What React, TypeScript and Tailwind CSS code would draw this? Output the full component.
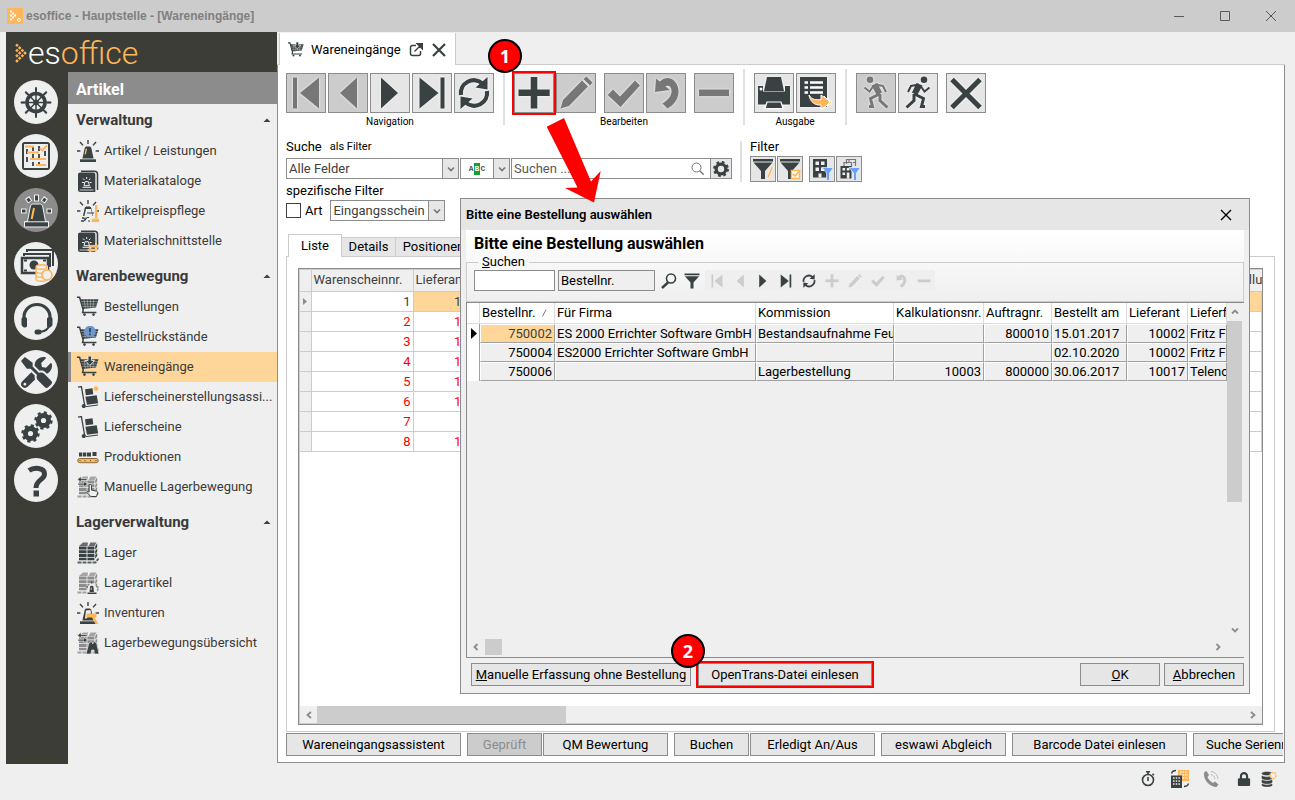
import type { ReactNode } from "react";
import { FaLock, FaTools } from "react-icons/fa";

const DARK = "#3a4142";
const ORANGE = "#fdb65a";

type SvgProps = { size?: number; box?: number; children: ReactNode };

const Svg = ({ size = 22, box = size, children }: SvgProps) => (
    <svg width={size} height={size} viewBox={`0 0 ${box} ${box}`} fill="none" className="shrink-0" aria-hidden="true">
        {children}
    </svg>
);

/* ---------- drawings ---------- */

const Siren = ({ glow = true }: { glow?: boolean }) => (
    <>
        <g stroke={DARK} strokeWidth="1.4">
            <path d="M11 0v4M3 2l3 3.4M19 2l-3 3.4M0 11h3.4M18.6 11H22" />
        </g>
        <path d="M5.4 18.4 7.6 8.6C8 7 8.6 6.6 10 6.6h2c1.4 0 2 .4 2.4 2l2.2 9.8z" fill={DARK} />
        <path d="M3 19.3h16V22H3z" fill={DARK} />
        {glow && <path d="M9.4 8.6 8.2 14.4" stroke={ORANGE} strokeWidth="1.4" />}
    </>
);

const Book = () => (
    <>
        <path d="M4 1.2h13.5c2 0 3 1 3 3V20" stroke={DARK} strokeWidth="1.5" />
        <path d="M1 5c0-1.600.8-2.400 2.400-2.400H16c1.600 0 2.300.8 2.300 2.400v17H3.200C1.800 22 1 21.200 1 19.800z" fill={DARK} />
        <path d="M2.600 20h14" stroke="#efefef" strokeWidth=".8" />
        <path d="M9.700 7v2M5 12.500h2M12.600 12.500h2M6 8.500l1.500 1.500M13.400 8.500 12 10M5.500 17.300h8.600M7 15.700l1-4h3.400l1 4z" stroke="#efefef" />
    </>
);

const Cart = () => (
    <>
        <path d="M0 1.200h2.600L6.200 14l-.6 2.500h13.800" stroke={DARK} strokeWidth="1.500" />
        <path d="M3.200 3.200h18.300L19 11.600 5.600 13z" fill={DARK} />
        <path d="M4 5.500h17M4.800 8h15.600M5.500 10.400h14M7 3.400l1.400 9M10.200 3.400l.8 9M13.400 3.400v9M16.600 3.400l-.8 9" stroke="#efefef" strokeWidth=".4" />
        <circle cx="7.500" cy="18.600" r="1.300" fill={DARK} />
        <circle cx="16.500" cy="18.600" r="1.300" fill={DARK} />
    </>
);

const ArrowDown = () => (
    <path d="M11 0h3.600v4.500h3L12.800 9.400 8 4.500h3z" fill={DARK} stroke="#fff" strokeWidth=".8" />
);

const Trolley = () => (
    <>
        <path d="M1 1.200 4.400.6 7.600 19" stroke={DARK} strokeWidth="1.300" />
        <path d="m8 3.200 7.500-1 .8 6-7.500 1z" fill={DARK} />
        <path d="m8.400 10.800 11.300-1.600 1.500 8L10 18.800z" fill={DARK} />
        <path d="m9 20.600 12-1.600" stroke={DARK} />
        <circle cx="6.800" cy="20" r="2.100" fill={DARK} />
    </>
);

const Shelf = ({ color }: { color: string }) => (
    <>
        <path d="M2 4 6 .500h5L10.500 4zM11.500 4l2-3.500h6L17.500 4z" fill={color} opacity=".75" />
        <path d="M2 4.600h7.600v2.900H2zM2 8.300h7.600v2.900H2zM2 12h7.600v2.900H2zM2 15.700h7.600v2.600H2z" fill={color} />
        <path d="M10.400 4.600h7v2.900h-7zM10.400 8.300h7v2.900h-7zM10.400 12h7v2.900h-7zM10.400 15.700h7v2.600h-7z" fill={color} />
        <path d="m18.200 4.200 2-3v4l-2 2.500zM18.200 9l2-2.500v3.300l-2 2.500zM18.200 13.300l2-2.500v3.300l-2 2.500z" fill={color} />
        <path d="M.500 20.500h18l3-4" stroke={color} strokeWidth="2" strokeDasharray="4 1" opacity=".8" />
    </>
);

const MoveArrows = () => (
    <g stroke="#efefef" strokeWidth=".6" fill={DARK}>
        <path d="M.500 3.300 4 .500v2h6v1.800H4v2z" />
        <path d="M10.500 8 7 5.200v2H1V9h6v2z" />
    </g>
);

const navIcons: Record<string, ReactNode> = {
    siren: <Siren />,
    book: <Book />,
    price: (
        <>
            <Siren glow={false} />
            <path d="M9 9h5l2 9H7z" fill="#efefef" />
            <path d="M1 16h20v6H1z" fill="#efefef" />
            <path d="M10 13h7M7 21.300l3-4M8 18a1 1 0 1 0 .1 0M12 17.500h-2M11 21h2" stroke={DARK} />
            <path d="M4 21h3M5 18h2" stroke={DARK} strokeWidth="1.500" />
            <path d="M18 5h2.400v13H18zM15.500 18.500H22V22h-8z" fill={ORANGE} />
        </>
    ),
    interface: (
        <>
            <Book />
            <g fill={ORANGE} stroke="#efefef" strokeWidth=".5">
                <path d="M22 16.300 18.500 13.500v1.800H12v2h6.500v1.800z" />
                <path d="M10.500 20 14 17.200V19h7v2h-7v1.800z" />
            </g>
        </>
    ),
    cart: <Cart />,
    backlog: (
        <>
            <Cart />
            <circle cx="13" cy="5.500" r="5.800" fill="#6d97d0" />
            <path d="M13 2v4.200M13 7.500v1.700" stroke={DARK} strokeWidth="1.700" />
        </>
    ),
    incoming: (
        <>
            <Cart />
            <ArrowDown />
        </>
    ),
    assistant: (
        <>
            <Trolley />
            <circle cx="19" cy="2.600" r="2" fill={ORANGE} />
            <path d="M19 0v5.200M16.400 2.600h5.200M17.200.800l3.600 3.600M20.800.800l-3.600 3.600" stroke={ORANGE} />
        </>
    ),
    trolley: <Trolley />,
    production: (
        <>
            <path d="M2 6.500h3.300v4H2zM6 6.500h3.300v4H6zM10 6.500h4v4h-4zM15.500 6h4v4h-4z" fill={DARK} />
            <rect x=".7" y="12.500" width="20.600" height="4.200" rx="2.100" fill={ORANGE} stroke="#8a6a3c" />
            <path d="M2.500 14.600h1M7.500 14.600h1M13 14.600h1M18.500 14.600h1" stroke={DARK} />
        </>
    ),
    manual: (
        <>
            <Shelf color="#8c8c8c" />
            <MoveArrows />
            <path d="M13 8.500c1.200 0 1.500.6 1.500 1.600v4l5 1c1 .3 1.200 1 1 2l-1 3.400h-5.700L9.400 16c.8-1 2-.6 2.700.3V10c0-1 .2-1.500.9-1.500z" fill="#efefef" stroke={DARK} />
        </>
    ),
    shelf: <Shelf color={DARK} />,
    shelfArticle: (
        <>
            <Shelf color="#8c8c8c" />
            <path d="M9.500 22 11 14.500l2-2.500h4l2 2.500L20.500 22z" fill="#efefef" />
            <path d="M12.500 20 13 14.500c.3-1 3-1 3.400 0L17 20zM10.500 20.600h9V22h-9z" fill={DARK} />
            <path d="M14.200 15.500v2.500" stroke={ORANGE} />
            <path d="M9 15h2M19.500 15h2M14.800 9.500v2" stroke={DARK} />
        </>
    ),
    inventory: (
        <>
            <Siren glow={false} />
            <path d="m9 8.500 4.500-.5.500 3-4.500 5.500H8z" fill="#efefef" />
            <path d="M9.500 11.500h10v4h-2l4 6.500h-3l-3.500-6.500h-5.500z" fill={ORANGE} />
        </>
    ),
    overview: (
        <>
            <Shelf color="#8c8c8c" />
            <MoveArrows />
            <path d="m9 22 3-11 2.500-1.500L15.800 12l1.300-2.500L19.600 11 22 22h-4.600l-.4-4h-2.400l-.6 4z" fill={DARK} stroke="#efefef" strokeWidth=".6" />
        </>
    ),
};

const Gear = ({ cx, cy, r, hole, color = DARK }: { cx: number; cy: number; r: number; hole: number; color?: string }) => {
    const step = (Math.PI * r) / 8;
    return (
        <g stroke={color}>
            <circle cx={cx} cy={cy} r={(r + hole) / 2} strokeWidth={r - hole} />
            <circle cx={cx} cy={cy} r={r} strokeWidth={r * 0.45} strokeDasharray={`${step} ${step}`} />
        </g>
    );
};

const railIcons: { label: string; icon: ReactNode }[] = [
    {
        label: "Start",
        icon: (
            <Svg size={44}>
                <circle cx="22" cy="22.500" r="9" stroke={DARK} strokeWidth="3.600" />
                <circle cx="22" cy="22.500" r="2.800" fill={DARK} />
                <path d="M22 8v29M7.500 22.500h29M11.800 12.300l20.400 20.400M32.200 12.300 11.800 32.700" stroke={DARK} strokeWidth="1.500" />
                <path d="M22 8v3M22 34v3M7.500 22.500h3M33.500 22.500h3M11.800 12.300l2 2M30.200 30.700l2 2M32.200 12.300l-2 2M13.800 30.700l-2 2" stroke={DARK} strokeWidth="2" strokeLinecap="round" />
            </Svg>
        ),
    },
    {
        label: "Planung",
        icon: (
            <Svg size={44}>
                <rect x="9" y="9" width="26" height="26" rx="1.500" stroke={DARK} strokeWidth="2" />
                <path d="M13 15v16M19 12v20M25 12v20M31 17v9" stroke={DARK} strokeWidth="1.800" strokeDasharray="5 3" />
                <path d="M11 12.500h9M13 18.500h12M16 25h16M22 31h10" stroke={ORANGE} strokeWidth="2.200" />
                <path d="m26 14 2.400 2.500 4.600-5" stroke={ORANGE} strokeWidth="2" />
            </Svg>
        ),
    },
    {
        label: "Artikel",
        icon: (
            <Svg size={44}>
                <g stroke="#efefef" strokeWidth="5">
                    <path d="M22.500 6.500v7M13 9.500l3.200 4.500M32 9.500 28.800 14M7 23h5.500M32.500 23H38" />
                </g>
                <g stroke={DARK} strokeWidth="3">
                    <path d="M22.500 7.500v5M13.700 10.500l2 2.800M31.300 10.500l-2 2.800M8 23h3.500M33.500 23H37" />
                </g>
                <path d="M13.500 33.500 16.200 19c.5-2 1.400-3 3.300-3h6c2 0 2.800 1 3.300 3l2.700 14.500h3V39h-24v-5.500z" fill={DARK} stroke="#efefef" />
                <path d="M10.500 33.800h24" stroke="#efefef" />
                <path d="m20 20-2.300 11" stroke={ORANGE} strokeWidth="2" />
            </Svg>
        ),
    },
    {
        label: "Finanzen",
        icon: (
            <Svg size={44}>
                <path d="M13 10V8h26v16M10 14v-2h26v13" stroke={DARK} strokeWidth="2" />
                <rect x="8" y="16" width="26" height="15" fill="#efefef" stroke={DARK} strokeWidth="2.500" />
                <circle cx="20" cy="23" r="4.500" fill={DARK} />
                <path d="M10 18.500h3M10 28.500h3M29 18.500h3" stroke={DARK} strokeWidth="2" />
                <path d="M22 23.500h12v16H22z" fill="#efefef" />
                <path d="M22 25c0-3 11-3 11 0s-11 3-11 0v4c0 3 11 3 11 0M22 29v4c0 3 11 3 11 0M22 33v4c0 3 11 3 11 0v-4" stroke={ORANGE} strokeWidth="1.400" />
                <circle cx="33" cy="33" r="5" fill="#efefef" stroke={ORANGE} strokeWidth="1.600" />
            </Svg>
        ),
    },
    {
        label: "Service",
        icon: (
            <Svg size={44}>
                <path d="M10 25v-4a13 12.500 0 0 1 26 0v4" stroke={DARK} strokeWidth="3.200" />
                <path d="M7.500 22.500c1-2 5-2 5.500 0v8c-1.500 2-4.500 1-5.500-1.500zM33 22.500c1-2 5-2 5.500 0V29c-1 2.500-4 3.500-5.500 1.500z" fill={DARK} />
                <path d="M35.500 29c-1 4-4 6.500-10 7" stroke={DARK} strokeWidth="2" />
                <rect x="20.500" y="33.500" width="7" height="5" rx="2.500" fill={DARK} />
            </Svg>
        ),
    },
    { label: "Werkzeuge", icon: <FaTools size={31} color={DARK} aria-hidden="true" /> },
    {
        label: "Einstellungen",
        icon: (
            <Svg size={44}>
                <Gear cx={29.500} cy={16.500} r={7.500} hole={2.600} />
                <Gear cx={16.500} cy={29.500} r={7.500} hole={2.600} />
            </Svg>
        ),
    },
    {
        label: "Hilfe",
        icon: (
            <Svg size={44}>
                <path d="M15 12.500c5-3.500 15.500-3 15.500 3.500 0 6-8.500 5.500-8.500 14" stroke={DARK} strokeWidth="5" />
                <path d="M19.500 32.500h5.500v6h-5.500z" fill={DARK} />
            </Svg>
        ),
    },
];

/* shapes shared by the large toolbar and the small one in the dialog, 38 x 38 */
const tools: Record<string, ReactNode> = {
    first: <path d="M6 3.500h4v31H6zM32 3.500v31L13 19z" fill="currentColor" />,
    prev: <path d="M28 3.500v31L11 19z" fill="currentColor" />,
    next: <path d="M10 3.500v31L27 19z" fill="currentColor" />,
    last: <path d="M6.500 3.500v31L25.500 19zM27.500 3.500h4v31h-4z" fill="currentColor" />,
    plus: <path d="M15.700 3h6.600v12.500h12.400v6.600H22.300V34.500h-6.600V22.100H3.500v-6.600h12.200z" fill="currentColor" />,
    minus: <path d="M4 15.500h30v6.600H4z" fill="currentColor" />,
    pencil: <path d="M3.500 34.500 6 26l19-19.500 6 6L12 32zM26.500 5l3-2.500 6 6-2.500 3z" fill="currentColor" />,
    check: <path d="M2.700 21 8 15.500l7 7L30 6.500l5 5-19.500 21.500z" fill="currentColor" />,
    undo: <path d="m9 4.500 4 3C22-1 32 8 31.500 18c0 7-4.500 13-11 16.500l-5-5c6-4 9-8 9-12.500 0-5-3.500-6.500-6-4.500l4.500 3.500L8 18z" fill="currentColor" />,
    close: <path d="m5 5.500 28 28M33 5.500l-28 28" stroke="currentColor" strokeWidth="5" />,
    refresh: (
        <>
            <path d="M6 21A13 13 0 0 1 27.500 9.500M32 17A13 13 0 0 1 10.500 28.500" stroke="currentColor" strokeWidth="4.200" />
            <path d="M32.500 3v12.500L20.500 13.500zM5.500 35V22.500L17.500 24.500z" fill="currentColor" />
        </>
    ),
    print: (
        <>
            <path d="M12 3h14l3 14H9zM3 12h5v5.500h22V12h5v18.500H3z" fill="currentColor" />
            <path d="M12 28h14l2 6.500H10z" fill="currentColor" stroke="#fff" strokeWidth="1.200" />
            <circle cx="6" cy="15" r="1.500" fill="#fff" />
        </>
    ),
    list: (
        <>
            <path d="M3 3h27v30H3z" fill="currentColor" />
            <path d="M7.500 8.500H11M7.500 13.500H11M7.500 18.500H11M13 8.500h13M13 13.500h13M13 18.500h13" stroke="#fff" strokeWidth="2.600" />
            <path d="M12 21c3 5 7 5 12 4.500V21l11 7.500L24 35v-4c-6 .5-11-3-12-10z" fill={ORANGE} stroke="#fff" />
            <path d="m27 22 6 6-6 6" stroke="#fff" />
        </>
    ),
    run: (
        <>
            <circle cx="25" cy="5.700" r="3.300" fill="currentColor" />
            <path d="m17.500 9 6 2.500-5.500 10-5-3z" fill="currentColor" />
            <path d="m20 10.500-8 1.500-3 6M22 12.500l3.500 5 5-4" stroke="currentColor" strokeWidth="2" />
            <path d="m15.500 20 9 4.500-2 8h3.500M15 20v6.500l-7.500 7" stroke="currentColor" strokeWidth="3" />
        </>
    ),
};
tools.runBack = <g transform="matrix(-1 0 0 1 38 0)">{tools.run}</g>;

/* ---------- controls ---------- */

const ToolButton = ({ icon, label, disabled }: { icon: string; label: string; disabled?: boolean }) => (
    <button
        aria-label={label}
        disabled={disabled}
        className={`size-10 shrink-0 border border-[#8c8c8c] ${disabled ? "bg-[#cccccc] text-[#777777]" : "bg-[#e6e6e6] text-[#3a4142]"}`}
    >
        <svg width="38" height="38" viewBox="0 0 38 38" fill="none" className="drop-shadow-[0_0_1px_#fff]" aria-hidden="true">
            {tools[icon]}
        </svg>
    </button>
);

const Caption = ({ children }: { children: ReactNode }) => (
    <span className="mt-px text-center text-[10px] leading-4">{children}</span>
);

const Divider = () => <div className="h-14 w-[2px] bg-[#e0e0e0]" />;

const Chevron = () => (
    <span className="flex w-4 items-center justify-center border-l border-[#8c8c8c] bg-[#e6e6e6]">
        <Svg size={8}>
            <path d="m1 2.500 3 3 3-3" stroke="#777" strokeWidth="1.600" />
        </Svg>
    </span>
);

const Combo = ({ label, value, className }: { label: string; value: string; className: string }) => (
    <div className={`flex h-[21px] border border-[#8c8c8c] bg-white ${className}`}>
        <select aria-label={label} className="min-w-0 flex-1 appearance-none pl-0.5 text-[#404040] outline-none">
            <option>{value}</option>
        </select>
        <Chevron />
    </div>
);

const PushButton = ({ children, className = "", disabled }: { children: ReactNode; className?: string; disabled?: boolean }) => (
    <button
        disabled={disabled}
        className={`h-[23px] shrink-0 border border-[#8c8c8c] whitespace-nowrap leading-5 ${disabled ? "bg-[#cccccc] text-[#8c8c8c]" : "bg-[#e6e6e6] text-black"} ${className}`}
    >
        {children}
    </button>
);

const Badge = ({ n, className }: { n: number; className: string }) => (
    <span
        className={`absolute z-40 flex size-[34px] items-center justify-center rounded-full border-2 border-black bg-[#ff0000] font-['Open_Sans',sans-serif] text-lg font-bold text-white ${className}`}
    >
        {n}
    </span>
);

/* ---------- window parts ---------- */

const TitleBar = () => (
    <header className="flex h-8 items-center bg-[#cccccc] pr-[9px] pl-[7px]">
        <Svg size={16}>
            <path d="M0 0h16v16H0z" fill={ORANGE} />
            <path d="M3 2.500h2v2H3zM5 4.500h2v2H5zM7 6.500h2v2H7zM5 8.500h2v2H5zM3 10.500h2v2H3zM3 6.500h2v2H3z" fill="#fff" />
            <circle cx="12" cy="12" r="1.500" stroke="#fff" />
        </Svg>
        <h1 className="ml-[3px] flex-1 font-['Liberation_Sans',sans-serif] text-xs font-bold text-[#808080]">
            esoffice - Hauptstelle - [Wareneingänge]
        </h1>
        <div className="-mr-2 flex text-[#5a5a5a]">
            <button aria-label="Minimieren" className="flex w-[46px] justify-center">
                <Svg size={12}><path d="M1 6.500h10" stroke="currentColor" /></Svg>
            </button>
            <button aria-label="Maximieren" className="flex w-[46px] justify-center">
                <Svg size={12}><path d="M1.500 1.500h9v9h-9z" stroke="currentColor" /></Svg>
            </button>
            <button aria-label="Schließen" className="flex w-[46px] justify-center">
                <Svg size={12}><path d="m1 1 10 10M11 1 1 11" stroke="currentColor" /></Svg>
            </button>
        </div>
    </header>
);

const navGroups = [
    {
        title: "Verwaltung",
        items: [
            ["siren", "Artikel / Leistungen"],
            ["book", "Materialkataloge"],
            ["price", "Artikelpreispflege"],
            ["interface", "Materialschnittstelle"],
        ],
    },
    {
        title: "Warenbewegung",
        items: [
            ["cart", "Bestellungen"],
            ["backlog", "Bestellrückstände"],
            ["incoming", "Wareneingänge"],
            ["assistant", "Lieferscheinerstellungsassi..."],
            ["trolley", "Lieferscheine"],
            ["production", "Produktionen"],
            ["manual", "Manuelle Lagerbewegung"],
        ],
    },
    {
        title: "Lagerverwaltung",
        items: [
            ["shelf", "Lager"],
            ["shelfArticle", "Lagerartikel"],
            ["inventory", "Inventuren"],
            ["overview", "Lagerbewegungsübersicht"],
        ],
    },
];

const Sidebar = () => (
    <aside className="flex w-[271px] shrink-0 flex-col">
        <div className="flex h-10 items-center bg-[#3d3d37] pt-0.5 pl-2">
            <Svg size={20}>
                <path
                    d="M3 .500l1.800 1.800L3 4.100 1.200 2.300zM5.700 3.100l1.800 1.800-1.800 1.800-1.800-1.800zM8.400 5.700l1.800 1.800-1.800 1.800-1.800-1.800zM11 8.300l1.800 1.800L11 11.900l-1.800-1.800zM8.400 10.900l1.800 1.800-1.800 1.800-1.800-1.800zM5.700 13.500l1.800 1.800-1.800 1.800-1.800-1.800zM3 16.100l1.800 1.800L3 19.700l-1.800-1.800zM3 5.700l1.800 1.800L3 9.300 1.200 7.500zM5.700 8.300l1.800 1.800-1.800 1.800-1.800-1.800zM3 10.900l1.800 1.800L3 14.500l-1.800-1.800z"
                    fill={ORANGE}
                />
            </Svg>
            <span className="-ml-1.5 text-[32px] font-light text-white">
                es<span className="text-[#fdb65a]">office</span>
            </span>
        </div>
        <div className="flex flex-1">
            <div className="flex w-[62px] flex-col items-center gap-2.5 bg-[#3d3d37] pt-2 pr-0.5">
                {railIcons.map((r) => (
                    <button
                        key={r.label}
                        aria-label={r.label}
                        className={`flex size-11 items-center justify-center rounded-full ${r.label === "Artikel" ? "bg-[#8c8c8c]" : "bg-[#efefef]"}`}
                    >
                        {r.icon}
                    </button>
                ))}
            </div>
            <nav className="min-w-0 flex-1 text-[#3a3a3a]">
                <h2 className="flex h-8 items-center bg-[#8c8c8c] pt-1 pl-2 text-base font-bold text-white">Artikel</h2>
                {navGroups.map((g) => (
                    <section key={g.title} className="mb-1">
                        <h3 className="flex h-8 items-center justify-between pr-1.5 pl-2 text-[15px] font-bold">
                            {g.title}
                            <Svg size={8}><path d="M.500 6 4 2.500 7.500 6z" fill={DARK} /></Svg>
                        </h3>
                        {g.items.map(([icon, text]) => (
                            <a
                                key={text}
                                href="#"
                                className={`flex h-[30px] items-center gap-[5px] border-l-[3px] pl-1.5 whitespace-nowrap ${icon === "incoming" ? "border-[#8c8c8c] bg-[#ffd699]" : "border-transparent"}`}
                            >
                                <Svg>{navIcons[icon]}</Svg>
                                {text}
                            </a>
                        ))}
                    </section>
                ))}
            </nav>
        </div>
    </aside>
);

const Toolbar = () => (
    <div className="flex gap-[9px] pt-1">
        <div className="flex flex-col pt-1">
            <div className="flex gap-0.5">
                <ToolButton icon="first" label="Erster" disabled />
                <ToolButton icon="prev" label="Zurück" disabled />
                <ToolButton icon="next" label="Weiter" />
                <ToolButton icon="last" label="Letzter" />
                <ToolButton icon="refresh" label="Aktualisieren" />
            </div>
            <Caption>Navigation</Caption>
        </div>
        <Divider />
        <div className="flex flex-col pt-1">
            <div className="flex gap-2">
                <div className="flex gap-0.5">
                    <div className="relative z-30 flex ring-2 ring-[#ff0000]">
                        <ToolButton icon="plus" label="Neu" />
                        <Badge n={1} className="-top-[34px] -left-[26px]" />
                        <svg width="56" height="86" viewBox="0 0 56 86" className="pointer-events-none absolute top-[45px] left-8" aria-hidden="true">
                            <path d="M.700 8.700 18 0l27 63.500 9.700-10.500L48 84.500 19 70l12.500-.5z" fill="#f00" />
                        </svg>
                    </div>
                    <ToolButton icon="pencil" label="Bearbeiten" disabled />
                </div>
                <div className="flex gap-0.5">
                    <ToolButton icon="check" label="Speichern" disabled />
                    <ToolButton icon="undo" label="Rückgängig" disabled />
                </div>
                <ToolButton icon="minus" label="Löschen" disabled />
            </div>
            <Caption>Bearbeiten</Caption>
        </div>
        <Divider />
        <div className="flex flex-col pt-1">
            <div className="flex gap-0.5">
                <ToolButton icon="print" label="Drucken" />
                <ToolButton icon="list" label="Exportieren" />
            </div>
            <Caption>Ausgabe</Caption>
        </div>
        <Divider />
        <div className="flex gap-2 pt-1">
            <div className="flex gap-0.5">
                <ToolButton icon="runBack" label="Zurückspringen" disabled />
                <ToolButton icon="run" label="Springen" />
            </div>
            <ToolButton icon="close" label="Beenden" />
        </div>
    </div>
);

const Funnel = () => <path d="M2 2h20v2.400H2zM2.500 5.500h19L14 14v8h-4v-8z" fill={DARK} />;
const BlueFunnel = () => <path d="M12 10.500h11.500L19.500 16v7.500h-3V16z" fill="#6ba0fa" stroke="#fff" strokeWidth=".6" />;

const filterButtons = [
    {
        label: "Filter bearbeiten",
        icon: (
            <>
                <Funnel />
                <path d="m15.500 22.500 1-4L20.500 9l2 1-4 10z" fill={ORANGE} stroke="#fff" strokeWidth=".6" />
            </>
        ),
    },
    {
        label: "Filter anwenden",
        icon: (
            <>
                <Funnel />
                <path d="M13.500 13.500h8v8h-8z" fill="#fff" stroke={ORANGE} strokeWidth="1.500" />
                <path d="m15 17 2 2 5-5.500" stroke={ORANGE} strokeWidth="1.800" />
            </>
        ),
    },
    {
        label: "Niederlassung filtern",
        icon: (
            <>
                <path d="M3 2h14v18.500H3z" fill={DARK} />
                <path d="M5.500 4.500H9V8H5.500zM11 4.500h3.500V8H11zM5.500 10.500H9V14H5.500zM11 10.500h3.500V14H11zM8.500 16.500h3v4h-3z" fill="#efefef" />
                <BlueFunnel />
            </>
        ),
    },
    {
        label: "Niederlassungen filtern",
        icon: (
            <>
                <path d="M9.500 7V2.500h9V9M7 9.500v-4h7.500V10M12 5V2.500M16 5.500h2" stroke="#777" strokeWidth="1.200" />
                <path d="M3.500 9h11v12.500h-11z" fill={DARK} />
                <path d="M5.500 11h2.600v2.500H5.500zM9.800 11h2.600v2.500H9.800zM5.500 15.500h2.600V18H5.500zM9.800 15.500h2.600v6H9.800z" fill="#efefef" />
                <BlueFunnel />
            </>
        ),
    },
];

const SearchArea = () => (
    <div className="mt-[9px] flex gap-2">
        <div className="flex flex-col">
            <div className="flex h-4 items-center gap-2">
                <span>Suche</span>
                <span className="text-[11px]">als Filter</span>
            </div>
            <div className="mt-[3px] flex">
                <Combo label="Suchfeld" value="Alle Felder" className="w-[173px]" />
                <button aria-label="Suchmodus" className="ml-px flex h-[21px] w-[50px] border border-[#8c8c8c] bg-white">
                    <span className="flex flex-1 items-center justify-center self-center font-['Liberation_Mono',monospace] text-[8px] leading-none font-bold text-[#555]">
                        A<span className="bg-[#12a036] px-px py-0.5 text-white">B</span>C
                    </span>
                    <span className="flex self-stretch"><Chevron /></span>
                </button>
                <div className="ml-px flex h-[21px] w-[200px] items-center border border-[#8c8c8c] bg-white">
                    <input aria-label="Suchen" placeholder="Suchen ..." className="min-w-0 flex-1 pl-0.5 outline-none placeholder:text-[#5a5a5a]" />
                    <span className="mr-[6px]">
                        <Svg size={13}>
                            <circle cx="5.500" cy="5.500" r="4.500" stroke="#777" />
                            <path d="m8.700 8.700 4 4" stroke="#777" strokeWidth="1.400" />
                        </Svg>
                    </span>
                </div>
                <button aria-label="Sucheinstellungen" className="flex size-[21px] items-center justify-center border border-l-0 border-[#8c8c8c] bg-[#e6e6e6]">
                    <Svg size={18}><Gear cx={9} cy={9} r={6.500} hole={3.200} /></Svg>
                </button>
            </div>
            <span className="mt-1 h-4 leading-4">spezifische Filter</span>
            <div className="mt-px flex items-center">
                <label className="flex items-center gap-1">
                    <input type="checkbox" className="size-[15px] appearance-none border border-[#404040] bg-white" />
                    Art
                </label>
                <Combo label="Art" value="Eingangsschein" className="ml-2 w-[115px]" />
            </div>
        </div>
        <div className="mt-0.5 h-[41px] w-[2px] bg-[#e0e0e0]" />
        <div>
            <span className="block h-4 leading-4">Filter</span>
            <div className="mt-px flex gap-px">
                {filterButtons.map((f, i) => (
                    <button key={f.label} aria-label={f.label} className={`size-[26px] border border-[#8c8c8c] bg-[#e6e6e6] ${i === 2 ? "ml-[5px]" : ""}`}>
                        <Svg size={24}>{f.icon}</Svg>
                    </button>
                ))}
            </div>
        </div>
    </div>
);

const receipts = [
    ["1", "10002"],
    ["2", "10002"],
    ["3", "10002"],
    ["4", "10017"],
    ["5", "10002"],
    ["6", "10017"],
    ["7", ""],
    ["8", "10002"],
];

const ReceiptTable = () => (
    <table className="w-full table-fixed border-collapse">
        <colgroup>
            <col className="w-[11px]" />
            <col className="w-[102px]" />
            <col className="w-[80px]" />
            <col />
            <col className="w-12" />
        </colgroup>
        <thead>
            <tr className="h-[21px] bg-[#efefef] text-left text-[#404040]">
                <th className="border-r border-b border-[#ccc]" />
                <th className="border-r border-b border-[#ccc] px-0.5 font-normal">Warenscheinnr.</th>
                <th className="border-r border-b border-[#ccc] px-0.5 font-normal">Lieferant</th>
                <th className="border-r border-b border-[#ccc]" />
                <th className="overflow-hidden border-b border-[#ccc] px-0.5 font-normal">Bestellung</th>
            </tr>
        </thead>
        <tbody>
            {receipts.map(([nr, supplier], i) => (
                <tr key={nr} className={`h-5 text-right ${i === 0 ? "text-[#404040]" : "text-[#ff0000]"}`}>
                    <td className="border-r border-b border-[#ccc] bg-[#efefef]">
                        {i === 0 && <Svg size={9}><path d="M3 1v7l4-3.500z" fill="#8c8c8c" /></Svg>}
                    </td>
                    <td className="border-r border-b border-[#ccc] pr-0.5 leading-[19px]">{nr}</td>
                    {[supplier, "", ""].map((v, c) => (
                        <td key={c} className={`border-r border-b border-[#ccc] pr-0.5 leading-[19px] ${i === 0 ? "bg-[#ffd699]" : ""}`}>{v}</td>
                    ))}
                </tr>
            ))}
        </tbody>
    </table>
);

const ScrollArrow = ({ d }: { d: string }) => (
    <Svg size={10}><path d={d} stroke="#8c8c8c" strokeWidth="1.800" /></Svg>
);

const orderColumns = [
    { title: "Bestellnr.", width: "w-[75px]", right: true },
    { title: "Für Firma", width: "w-[201px]" },
    { title: "Kommission", width: "w-[138px]" },
    { title: "Kalkulationsnr.", width: "w-[90px]", right: true },
    { title: "Auftragnr.", width: "w-[68px]", right: true },
    { title: "Bestellt am", width: "w-[75px]" },
    { title: "Lieferant", width: "w-[61px]", right: true },
    { title: "Lieferfirma", width: "" },
];

const orders = [
    ["750002", "ES 2000 Errichter Software GmbH", "Bestandsaufnahme Feuer", "", "800010", "15.01.2017", "10002", "Fritz Fuchs"],
    ["750004", "ES2000 Errichter Software GmbH", "", "", "", "02.10.2020", "10002", "Fritz Fuchs"],
    ["750006", "", "Lagerbestellung", "10003", "800000", "30.06.2017", "10017", "Telenorma"],
];

const OrderTable = () => (
    <table className="w-full table-fixed border-separate border-spacing-0">
        <colgroup>
            <col className="w-[13px]" />
            {orderColumns.map((c) => <col key={c.title} className={c.width} />)}
        </colgroup>
        <thead>
            <tr className="h-[21px] bg-white text-left">
                <th className="border-r border-b border-[#dcdcdc]" />
                {orderColumns.map((c, i) => (
                    <th key={c.title} className="overflow-hidden border-r border-b border-[#dcdcdc] pl-0.5 font-normal whitespace-nowrap">
                        {c.title}
                        {i === 0 && (
                            <span className="ml-1.5 inline-block">
                                <Svg size={8}><path d="M1.500 7.500 5 .500" stroke="#808080" /></Svg>
                            </span>
                        )}
                    </th>
                ))}
            </tr>
        </thead>
        <tbody>
            {orders.map((row, r) => (
                <tr key={row[0]} className="h-[19px]">
                    <td className="border-r border-[#a0a0a0] bg-white">
                        {r === 0 && <Svg size={11}><path d="M4 0v11l6-5.500z" fill="#000" /></Svg>}
                    </td>
                    {row.map((v, c) => (
                        <td
                            key={c}
                            className={`overflow-hidden border border-t-white border-r-[#a0a0a0] border-b-[#a0a0a0] border-l-white leading-[17px] whitespace-nowrap ${orderColumns[c].right ? "pr-0.5 text-right" : "pl-px"} ${r === 0 && c === 0 ? "bg-[#ffd699] text-[#404040]" : "bg-[#efefef]"}`}
                        >
                            {v}
                        </td>
                    ))}
                </tr>
            ))}
        </tbody>
    </table>
);

const dialogTools = ["first", "prev", "next", "last", "refresh", "plus", "pencil", "check", "undo", "minus"];
const activeTools = ["next", "last", "refresh"];

const OrderDialog = () => (
    <div
        role="dialog"
        aria-labelledby="dialog-title"
        className="absolute top-[133px] right-[34px] bottom-[68px] left-[182px] z-20 flex flex-col border border-[#8c8c8c] bg-[#efefef]"
    >
        <div className="flex h-[31px] items-center justify-between bg-[#e6e6e6] pr-[17px] pl-[5px]">
            <span id="dialog-title" className="font-semibold">Bitte eine Bestellung auswählen</span>
            <button aria-label="Schließen">
                <Svg size={12}><path d="m1 1 10 10M11 1 1 11" stroke="#000" strokeWidth="1.400" /></Svg>
            </button>
        </div>
        <div className="mx-[5px] flex min-h-0 flex-1 flex-col">
            <div className="bg-linear-to-b from-white to-[#efefef]">
                <h2 className="h-6 pt-0.5 pl-2 text-base leading-6 font-bold">Bitte eine Bestellung auswählen</h2>
                <fieldset className="border border-[#ccc] px-[7px] pb-2.5">
                    <legend className="ml-1 px-1 leading-4"><u>S</u>uchen</legend>
                    <div className="flex h-[21px] items-center">
                        <input aria-label="Suchen" className="h-[21px] w-[81px] border border-[#8c8c8c] bg-white outline-none" />
                        <select aria-label="Suchspalte" className="ml-[3px] h-[21px] w-[97px] appearance-none border border-[#8c8c8c] bg-[#efefef] pl-0.5">
                            <option>Bestellnr.</option>
                        </select>
                        <button aria-label="Suchen" className="ml-0.5 flex w-[23px] justify-center">
                            <Svg size={16}>
                                <circle cx="10" cy="5.500" r="4.500" stroke={DARK} strokeWidth="1.600" />
                                <path d="M7 9.500 1 15" stroke={DARK} strokeWidth="2.400" />
                            </Svg>
                        </button>
                        <button aria-label="Filtern" className="flex w-[23px] justify-center">
                            <Svg size={18} box={24}><Funnel /></Svg>
                        </button>
                        <div className="ml-0.5 flex bg-[#efefef]">
                            {dialogTools.map((t) => (
                                <button
                                    key={t}
                                    aria-label={t}
                                    disabled={!activeTools.includes(t)}
                                    className={`flex h-[21px] w-[23px] items-center justify-center ${activeTools.includes(t) ? "text-[#3a4142]" : "text-[#cccccc]"}`}
                                >
                                    <Svg size={16} box={38}>{tools[t]}</Svg>
                                </button>
                            ))}
                        </div>
                    </div>
                </fieldset>
            </div>
            <div className="flex min-h-0 flex-1 flex-col border-t border-b border-l border-[#8c8c8c]">
                <div className="flex min-h-0 flex-1">
                    <div className="min-w-0 flex-1"><OrderTable /></div>
                    <div className="mr-0.5 flex w-[15px] flex-col items-center">
                        <span className="flex h-[18px] items-center"><ScrollArrow d="M2 6.500 5 3.500l3 3" /></span>
                        <div className="h-[181px] w-full bg-[#cccccc]" />
                        <span className="mt-auto flex h-4 items-center"><ScrollArrow d="m2 3.500 3 3 3-3" /></span>
                    </div>
                </div>
                <div className="mr-[17px] mb-px flex h-[18px] items-center">
                    <span className="ml-1 flex w-[14px]"><ScrollArrow d="M6.500 2 3.500 5l3 3" /></span>
                    <div className="h-4 w-[17px] bg-[#cccccc]" />
                    <span className="mr-1 ml-auto"><ScrollArrow d="m3.500 2 3 3-3 3" /></span>
                </div>
            </div>
        </div>
        <div className="flex pt-[5px] pr-[5px] pb-[7px] pl-2.5">
            <PushButton className="w-[220px]"><u>M</u>anuelle Erfassung ohne Bestellung</PushButton>
            <div className="relative ml-[7px] flex ring-2 ring-[#ff0000]">
                <PushButton className="w-[174px]">OpenTrans-Datei einlesen</PushButton>
                <Badge n={2} className="-top-[29px] -left-[27px]" />
            </div>
            <PushButton className="ml-auto w-20"><u>O</u>K</PushButton>
            <PushButton className="ml-1 w-20"><u>A</u>bbrechen</PushButton>
        </div>
    </div>
);

const MainPanel = () => (
    <main className="mb-px flex min-w-0 flex-1 flex-col">
        <div className="flex h-[33px] border-b border-[#ccc] pt-px pl-0.5">
            <div className="-mb-px flex w-[177px] items-center border-r border-l border-[#ccc] bg-white pt-px pl-2">
                <Svg size={16} box={22}>{navIcons.incoming}</Svg>
                <span className="ml-[7px]">Wareneingänge</span>
                <button aria-label="In neuem Fenster öffnen" className="ml-2">
                    <Svg size={14}>
                        <path d="M7 2.500H3.500c-1 0-2 .8-2 2v6c0 1 .8 2 2 2h6c1 0 2-.8 2-2V8" stroke={DARK} strokeWidth="1.500" />
                        <path d="M8 .500h5.500V6zM11.500 2.500 5.500 8.500" fill={DARK} stroke={DARK} strokeWidth="1.400" />
                    </Svg>
                </button>
                <button aria-label="Tab schließen" className="ml-2">
                    <Svg size={16}><path d="m2 2 12 12M14 2 2 14" stroke={DARK} strokeWidth="2.200" /></Svg>
                </button>
            </div>
        </div>
        <div className="relative flex flex-1 flex-col border-r border-b border-l border-[#8c8c8c] bg-white pb-1.5 pl-2">
            <Toolbar />
            <SearchArea />
            <div role="tablist" className="relative z-10 mt-[13px] ml-0.5 flex items-end">
                <button role="tab" aria-selected="true" className="-mb-px h-[23px] w-[54px] border border-b-0 border-[#ccc] bg-white">Liste</button>
                <button role="tab" aria-selected="false" className="h-[19px] w-[54px] border-t border-r border-[#ccc] bg-[#e6e6e6] leading-[18px]">Details</button>
                <button role="tab" aria-selected="false" className="h-[19px] w-[76px] border-t border-r border-[#ccc] bg-[#e6e6e6] leading-[18px]">Positionen</button>
            </div>
            <div className="mr-[9px] flex flex-1 flex-col border border-[#ccc] px-[11px] pt-[11px] pb-1.5">
                <div className="flex flex-1 flex-col border border-[#8c8c8c]">
                    <div className="flex flex-1 flex-col border border-r-0 border-[#ccc]">
                        <ReceiptTable />
                        <div className="mt-auto flex h-[17px] items-center bg-[#efefef]">
                            <span className="flex w-[17px] justify-center"><ScrollArrow d="M7 2 3.500 5 7 8" /></span>
                            <div className="h-full w-[249px] bg-[#cccccc]" />
                            <span className="mr-1 ml-auto"><ScrollArrow d="M3 2l3.500 3L3 8" /></span>
                        </div>
                    </div>
                </div>
            </div>
            <div className="mt-px mr-px flex gap-px overflow-hidden">
                <PushButton className="mr-[5px] w-[175px]">Wareneingangsassistent</PushButton>
                <PushButton className="w-[75px]" disabled>Geprüft</PushButton>
                <PushButton className="mr-[5px] w-[125px]">QM Bewertung</PushButton>
                <PushButton className="w-[75px]">Buchen</PushButton>
                <PushButton className="mr-[5px] w-[125px]">Erledigt An/Aus</PushButton>
                <PushButton className="mr-[5px] w-[125px]">eswawi Abgleich</PushButton>
                <PushButton className="mr-[5px] w-[175px]">Barcode Datei einlesen</PushButton>
                <PushButton className="w-[125px] pl-3 text-left">Suche Seriennr.</PushButton>
            </div>
            <OrderDialog />
        </div>
    </main>
);

const StatusBar = () => (
    <footer className="flex h-9 items-center justify-end gap-3 pr-[18px] pb-1.5">
        <Svg size={18}>
            <circle cx="8" cy="10" r="5.500" stroke={DARK} strokeWidth="1.600" />
            <path d="M6 1.700h4M8 2v2.500M12.500 4l1.500 1M8 7v4" stroke={DARK} strokeWidth="1.600" />
        </Svg>
        <Svg size={20}>
            <path d="M8 1h11v11H8z" fill={ORANGE} />
            <path d="M10 3h8M10 6h8M10 9h8" stroke="#efefef" strokeDasharray="1.500 1" strokeWidth="1.500" />
            <path d="M1 6.500h11V19H1z" fill={DARK} />
            <path d="M3 9h8M3 12h8M3 15h8" stroke="#efefef" strokeDasharray="1.500 1.200" strokeWidth="1.300" />
            <path d="M1.500 4.500c.5-2 2-3 4.500-3M18.500 14.500c-.5 2-2 3-4.500 3" stroke={DARK} strokeWidth="1.300" />
        </Svg>
        <Svg size={18}>
            <path d="M2 2.500 4.500 1 7 5 5.500 7c1 2.500 3 4.500 5.500 6l2-1.500 3.500 3-2 2.500C8 17 1 10 2 2.500z" fill="#8c8c8c" />
            <path d="M8.500 4.500c2.500.5 4 2 4.500 4.500M9 1.500c4 .5 6.500 3 7 7.500" stroke="#bbb" />
        </Svg>
        <span className="ml-[5px]"><FaLock size={14} color={DARK} aria-hidden="true" /></span>
        <span className="-ml-0.5">
            <Svg size={16}>
                <path d="M1 2.500C1 .500 11 .500 11 2.500S1 4.500 1 2.500M1 5c1.500 1.500 8.500 1.500 10 0v2.500c-1.500 1.500-8.500 1.500-10 0zM1 9c1.500 1.500 8.500 1.500 10 0v2.500c-1.500 1.500-8.500 1.500-10 0zM1 13c1.500 1.500 8.500 1.500 10 0v1.500c-1.500 1.500-8.500 1.500-10 0z" fill={DARK} stroke={DARK} strokeWidth=".6" />
                <circle cx="12" cy="4.500" r="3" fill="#efefef" stroke={ORANGE} strokeDasharray="2 1" strokeWidth="1.400" />
            </Svg>
        </span>
    </footer>
);

export default function App() {
    return (
        <div className="flex min-h-screen flex-col bg-[#efefef] font-[Roboto,sans-serif] text-[13px] leading-4 text-black">
            <TitleBar />
            <div className="flex flex-1 pr-2.5 pl-1.5">
                <Sidebar />
                <MainPanel />
            </div>
            <StatusBar />
        </div>
    );
}
